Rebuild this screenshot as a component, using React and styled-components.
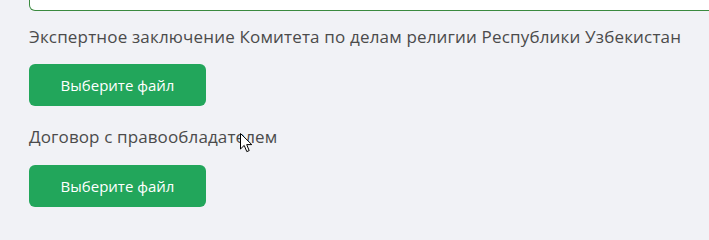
import React from 'react'
import styled, { createGlobalStyle } from 'styled-components'

const GlobalStyle = createGlobalStyle`
    html, body {
        margin: 0;
        padding: 0;
        background: #f1f2f6;
        overflow: hidden;
    }
`

const Page = styled.div`
    position: relative;
    width: 740px;
    padding-left: 29px;
    box-sizing: border-box;
    font-family: "Open Sans", "Liberation Sans", sans-serif;
`

const InputTail = styled.div`
    height: 10px;
    background: #ffffff;
    border: 1px solid #3b8a3f;
    border-top: none;
    border-radius: 0 0 6px 6px;
    margin-bottom: 14px;
`

const Fields = styled.div`
    display: flex;
    flex-direction: column;
    gap: 19px;
`

const Field = styled.div`
    display: flex;
    flex-direction: column;
    align-items: flex-start;
    gap: ${props => props.$tight ? '15px' : '16px'};
`

const Label = styled.div`
    font-size: 17px;
    line-height: 24px;
    letter-spacing: ${props => props.$strong ? '0.12px' : '0.17px'};
    color: #4b4b4b;
    font-weight: ${props => props.$strong ? 500 : 400};
    white-space: nowrap;
`

const FileButton = styled.button`
    width: 177px;
    height: 42px;
    border: none;
    border-radius: 6px;
    background: #22a65b;
    color: #ffffff;
    font-family: "Open Sans", "Liberation Sans", sans-serif;
    font-size: 15px;
    cursor: pointer;
    padding: 0;
`

const Cursor = styled.svg`
    position: absolute;
    left: 240px;
    top: 133px;
    pointer-events: none;
`

export default function App() {
    return (
        <Page>
            <GlobalStyle />
            <InputTail />
            <Fields>
                <Field $tight>
                    <Label>Экспертное заключение Комитета по делам религии Республики Узбекистан</Label>
                    <FileButton>Выберите файл</FileButton>
                </Field>
                <Field>
                    <Label $strong>Договор с правообладателем</Label>
                    <FileButton>Выберите файл</FileButton>
                </Field>
            </Fields>
            <Cursor width="13" height="20" viewBox="0 0 13 20">
                <path d="M0.5 0.5 L0.5 16 L4.2 12.4 L6.8 18.6 L9.2 17.6 L6.7 11.6 L11.8 11.6 Z" fill="#ffffff" stroke="#000000" strokeWidth="1" strokeLinejoin="round" />
            </Cursor>
        </Page>
    )
}
